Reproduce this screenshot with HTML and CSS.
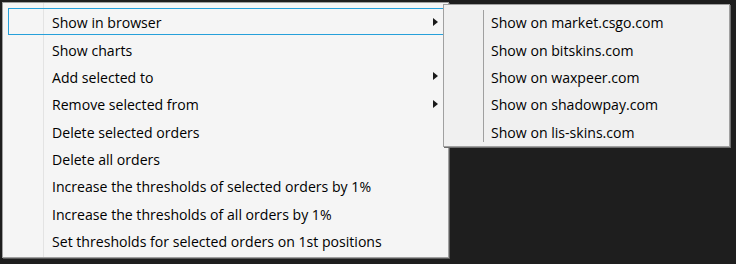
FILE: index.html
```html
<!DOCTYPE html>
<html>
<head>
<meta charset="utf-8">
<link rel="stylesheet" href="styles.css">
</head>
<body>
<div class="menu">
  <div class="item active"><span>Show in browser</span><span class="arrow"></span></div>
  <div class="item"><span>Show charts</span></div>
  <div class="item"><span>Add selected to</span><span class="arrow"></span></div>
  <div class="item"><span>Remove selected from</span><span class="arrow"></span></div>
  <div class="item"><span>Delete selected orders</span></div>
  <div class="item"><span>Delete all orders</span></div>
  <div class="item"><span>Increase the thresholds of selected orders by 1%</span></div>
  <div class="item"><span>Increase the thresholds of all orders by 1%</span></div>
  <div class="item"><span>Set thresholds for selected orders on 1st positions</span></div>
</div>
<div class="submenu">
  <div class="sitem">Show on market.csgo.com</div>
  <div class="sitem">Show on bitskins.com</div>
  <div class="sitem">Show on waxpeer.com</div>
  <div class="sitem">Show on shadowpay.com</div>
  <div class="sitem">Show on lis-skins.com</div>
</div>
</body>
</html>
```
FILE: styles.css
```css
html, body {
  margin: 0;
  padding: 0;
}
body {
  width: 736px;
  height: 264px;
  background: #1e1e1e;
  font-family: "Open Sans", "Noto Sans", sans-serif;
  font-size: 14.1px;
  color: #000;
  position: relative;
  overflow: hidden;
}
.menu {
  margin: 2px 0 0 2px;
  width: 447px;
  height: 256px;
  box-sizing: border-box;
  border: 1px solid #a0a0a0;
  box-shadow: 1px 1px 0 #5a5a5a;
  background-color: #f5f5f5;
  background-image: linear-gradient(to right, transparent 40px, #e3e3e3 40px, #e3e3e3 41px, transparent 41px);
  padding: 5px 4px 0 5px;
  display: flex;
  flex-direction: column;
}
.item {
  height: 27.375px;
  flex: none;
  box-sizing: border-box;
  border: 1px solid transparent;
  padding-left: 43px;
  padding-right: 5px;
  padding-top: 2px;
  display: flex;
  align-items: center;
  justify-content: space-between;
  white-space: nowrap;
}
.item.active {
  border-color: #26a0da;
}
.arrow {
  width: 0;
  height: 0;
  margin-top: -2px;
  border-top: 4px solid transparent;
  border-bottom: 4px solid transparent;
  border-left: 5px solid #1a1a1a;
}
.submenu {
  position: absolute;
  left: 443px;
  top: 4px;
  width: 287px;
  box-sizing: border-box;
  border: 1px solid #a0a0a0;
  box-shadow: 1px 1px 0 #6e6e6e;
  background: #f0f0f0;
  padding: 3px 2px 1px 2px;
}
.submenu::before {
  content: "";
  position: absolute;
  left: 39px;
  top: 5px;
  bottom: 4px;
  width: 1px;
  background: #a0a0a0;
}
.sitem {
  height: 27.375px;
  box-sizing: border-box;
  padding-left: 45px;
  padding-top: 2px;
  display: flex;
  align-items: center;
  white-space: nowrap;
}
```
